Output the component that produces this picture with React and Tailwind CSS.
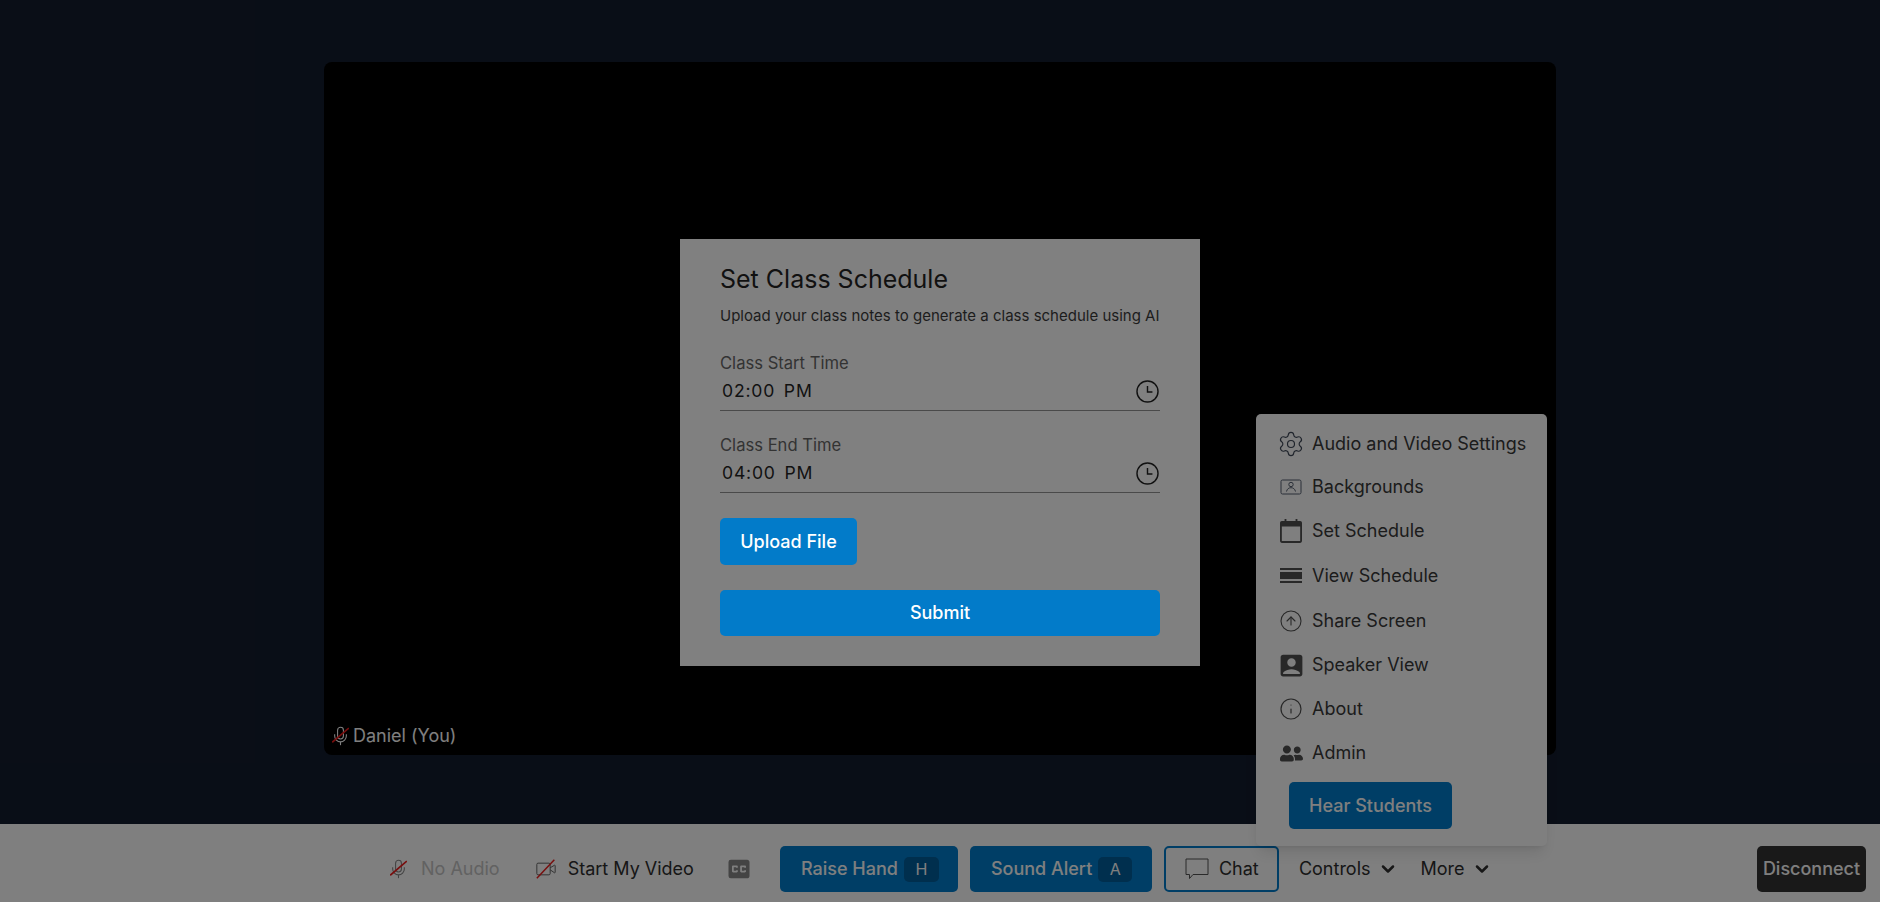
import { ChevronDown, CircleArrowUp, Info, Settings } from 'lucide-react';
import { MdAccountBox, MdClosedCaption } from 'react-icons/md';
import { FaUserFriends } from 'react-icons/fa';

const MutedMic = ({ color }) => (
    <svg width="17" height="20" viewBox="2 0 20 24" fill="none" stroke={color} strokeWidth="1.3" className="shrink-0">
        <rect x="8.5" y="1.5" width="7" height="14" rx="3.5" />
        <path d="M19 10v2a7 7 0 0 1-14 0v-2" />
        <path d="M12 19v4" />
        <path d="M2 19.500 22 2.500" stroke="#ef1c1c" strokeWidth="2" />
    </svg>
);

const MutedVideo = () => (
    <svg width="20" height="20" viewBox="0 0 24 24" fill="none" stroke="#666" strokeWidth="1.2" className="shrink-0">
        <rect x="1" y="5" width="16" height="14" rx="1.5" />
        <path d="m17 13 5.2 3.500a.5.5 0 0 0 .8-.4V7.900a.5.5 0 0 0-.8-.4L17 10.500" />
        <path d="M1 23 22 1" stroke="#ef1c1c" strokeWidth="1.8" />
    </svg>
);

const ClockIcon = () => (
    <svg width="23" height="23" viewBox="0 0 21 21" fill="none" stroke="#111" strokeWidth="1.3">
        <circle cx="10.5" cy="10.5" r="9.6" />
        <path d="M10.500 5.500v5.500h4.500" />
    </svg>
);

const BackgroundIcon = () => (
    <svg width="22" height="16" viewBox="0 0 22 16" fill="none" stroke="#555f70" strokeWidth="1">
        <rect x="1" y="1" width="20" height="14" rx="1.500" />
        <circle cx="11" cy="5.500" r="2.200" />
        <path d="M6.500 12.500c.6-2.600 2.300-3.800 4.500-3.800s3.900 1.200 4.500 3.800" />
    </svg>
);

const CalendarIcon = () => (
    <svg width="24" height="26" viewBox="0 0 24 26" fill="#505050">
        <path fillRule="evenodd" d="M5 0h2v2h10V0h2v2h3a2 2 0 0 1 2 2v20a2 2 0 0 1-2 2H2a2 2 0 0 1-2-2V4a2 2 0 0 1 2-2h3V0Zm-3 8v16h20V8H2Z" />
    </svg>
);

const RowsIcon = () => (
    <svg width="22" height="15" viewBox="0 0 22 15" fill="#505050">
        <rect x="0" y="0" width="22" height="2" />
        <rect x="0" y="4" width="22" height="7" />
        <rect x="0" y="13" width="22" height="2" />
    </svg>
);

const ChatIcon = () => (
    <svg width="24" height="22" viewBox="0 0 24 22" fill="none" stroke="#555" strokeWidth="1">
        <path d="M1 1h22v15.500H8l-3.500 4v-4H1V1Z" />
    </svg>
);

const menuItems = [
    { label: 'Audio and Video Settings', height: 'h-[43px]', icon: <Settings size={28} strokeWidth={1} color="#3f4858" className="shrink-0" /> },
    { label: 'Backgrounds', height: 'h-[43px]', icon: <BackgroundIcon /> },
    { label: 'Set Schedule', height: 'h-[45px]', icon: <CalendarIcon /> },
    { label: 'View Schedule', height: 'h-[45px]', icon: <RowsIcon /> },
    { label: 'Share Screen', height: 'h-[45px]', icon: <CircleArrowUp size={24} strokeWidth={1.1} color="#505050" className="shrink-0" /> },
    { label: 'Speaker View', height: 'h-[44px]', icon: <MdAccountBox size={29} color="#505050" className="shrink-0" /> },
    { label: 'About', height: 'h-[44px]', icon: <Info size={24} strokeWidth={1.2} color="#505050" className="shrink-0" /> },
    { label: 'Admin', height: 'h-[44px]', icon: <FaUserFriends size={23} color="#505050" className="shrink-0" /> },
];

const TimeField = ({ label, value }) => (
    <div>
        <div className="text-[16.6px] leading-6 text-[#333]">{label}</div>
        <div className="flex h-9 items-center justify-between border-b border-[#4a4a4a] pb-[2px] pl-[2px] pr-[1px]">
            <span className="text-[17.6px] tracking-[0.8px] [word-spacing:3px] whitespace-pre text-[#111]">{value}</span>
            <ClockIcon />
        </div>
    </div>
);

const App = () => {
    return (
        <div className="relative h-[902px] overflow-hidden bg-[#131c2e] font-[Inter,sans-serif]">
            <div className="flex h-[824px] justify-center pt-[62px]">
                <div className="relative h-[693px] w-[1232px] rounded-lg bg-black">
                    <div className="absolute bottom-[7px] left-[8px] flex items-center gap-[4px] text-lg leading-6 text-white">
                        <MutedMic color="#ffffff" />
                        <span>Daniel (You)</span>
                    </div>
                </div>
            </div>

            <div className="flex h-[78px] items-center bg-white pt-3 pl-[390px] text-lg text-[#2e2e2e]">
                <div className="flex items-center gap-[14px]">
                    <MutedMic color="#888" />
                    <span className="text-[#c4c4c4]">No Audio</span>
                </div>
                <div className="ml-[36px] flex items-center gap-[12px]">
                    <MutedVideo />
                    <span>Start My Video</span>
                </div>
                <MdClosedCaption size={28} color="#888" className="ml-[31px]" />
                <button className="ml-[27px] flex h-[46px] w-[178px] items-center gap-[6px] rounded-[5px] bg-[#007ccc] pl-[21px] font-medium text-white">
                    Raise Hand
                    <span className="flex h-[25px] w-[35px] items-center justify-center rounded-[5px] bg-[#005e9c] text-base font-normal">H</span>
                </button>
                <button className="ml-[12px] flex h-[46px] w-[182px] items-center gap-[6px] rounded-[5px] bg-[#007ccc] pl-[21px] font-medium text-white">
                    Sound Alert
                    <span className="flex h-[25px] w-[34px] items-center justify-center rounded-[5px] bg-[#005e9c] text-base font-normal">A</span>
                </button>
                <button className="ml-[12px] flex h-[46px] w-[115px] items-center gap-[10px] rounded-[5px] border-2 border-[#007ccc] pl-[19px]">
                    <ChatIcon />
                    Chat
                </button>
                <button className="ml-[20px] flex items-center gap-[7px]">
                    Controls
                    <ChevronDown size={20} strokeWidth={3} />
                </button>
                <button className="ml-[23px] flex items-center gap-[7px]">
                    More
                    <ChevronDown size={20} strokeWidth={3} />
                </button>
                <button className="mr-[14px] ml-auto h-[46px] w-[109px] rounded-[5px] bg-[#333] text-center font-medium whitespace-nowrap text-white">
                    Disconnect
                </button>
            </div>

            <div className="absolute top-[414px] left-[1256px] w-[291px] rounded-[5px] bg-white pt-2 pb-[17px] pl-[24px] text-lg text-[#383838] shadow-lg">
                {menuItems.map((item) => (
                    <div key={item.label} className={`flex items-center ${item.height}`}>
                        <span className="flex w-[32px] shrink-0 items-center">
                            <span className="flex w-[22px] shrink-0 justify-center">{item.icon}</span>
                        </span>
                        <span className="whitespace-nowrap">{item.label}</span>
                    </div>
                ))}
                <button className="mt-[7px] ml-[9px] h-[47px] w-[163px] rounded-[5px] bg-[#007ccc] font-medium text-white">
                    Hear Students
                </button>
            </div>

            <div className="absolute inset-0 bg-black/50"></div>

            <div className="absolute top-[239px] left-[680px] w-[520px] bg-[#808080] px-10 pt-6 pb-[30px]">
                <h2 className="text-[25px] leading-8 text-[#111]">Set Class Schedule</h2>
                <p className="mt-[10px] text-[15px] leading-[22px] whitespace-nowrap text-[#1c1c1c]">
                    Upload your class notes to generate a class schedule using AI
                </p>
                <div className="mt-6">
                    <TimeField label="Class Start Time" value="02:00 PM" />
                </div>
                <div className="mt-[22px]">
                    <TimeField label="Class End Time" value="04:00 PM" />
                </div>
                <button className="mt-[25px] block h-[47px] w-[137px] rounded-[5px] bg-[#027bc9] text-lg font-medium text-white">
                    Upload File
                </button>
                <button className="mt-[25px] block h-[46px] w-full rounded-[5px] bg-[#027bc9] text-lg font-medium text-white">
                    Submit
                </button>
            </div>
        </div>
    );
};

export default App;
